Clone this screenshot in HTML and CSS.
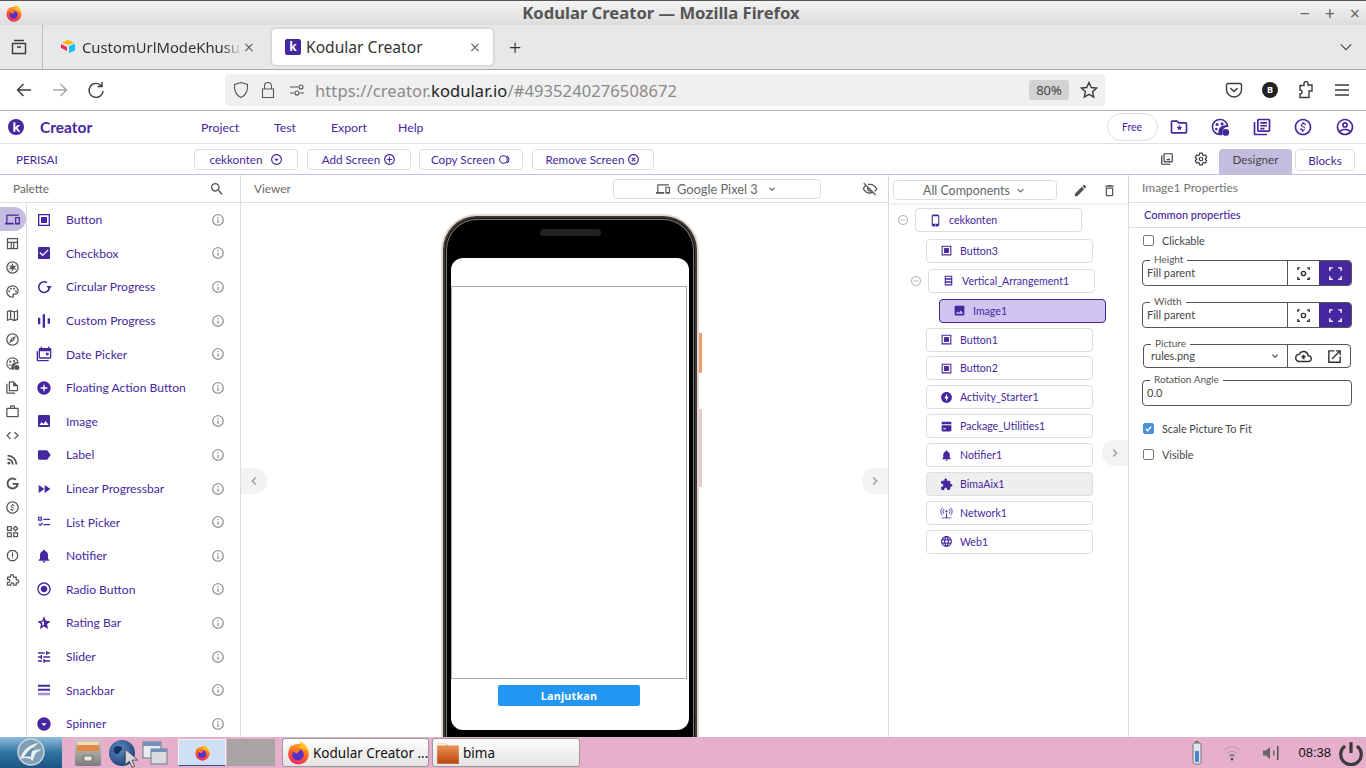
FILE: index.html
```html
<!DOCTYPE html>
<html lang="en">
<head>
<meta charset="utf-8">
<title>Kodular Creator — Mozilla Firefox</title>
<link rel="stylesheet" href="styles.css">
</head>
<body>
<svg class="sprite" aria-hidden="true">
<defs>
<linearGradient id="ffg" x1="0.7" y1="0" x2="0.3" y2="1"><stop offset="0" stop-color="#ffb11f"/><stop offset="0.55" stop-color="#ff5a2c"/><stop offset="1" stop-color="#e8216d"/></linearGradient>
<linearGradient id="foldg" x1="0" y1="0" x2="0" y2="1"><stop offset="0" stop-color="#ee9a5c"/><stop offset="1" stop-color="#b9450f"/></linearGradient>
<radialGradient id="globeg" cx="0.4" cy="0.35" r="0.7"><stop offset="0" stop-color="#5c8dc9"/><stop offset="1" stop-color="#1c3f74"/></radialGradient>
<linearGradient id="cabg" x1="0" y1="0" x2="0" y2="1"><stop offset="0" stop-color="#c9c9c5"/><stop offset="1" stop-color="#807e7a"/></linearGradient>
<symbol id="firefox" viewBox="0 0 24 24"><circle cx="12" cy="13.5" r="10" fill="url(#ffg)"/><path d="M13 1c5 2.500 9 6.500 9 12-2-3.500-5-5.500-9-5.500 1.500-2 1-4.500 0-6.500z" fill="#ffc21f"/><path d="M2.500 9c1-2 2-3.500 3.500-4.500 0 2 1 3 2.500 3.500z" fill="#ff8a1f"/><circle cx="11.500" cy="14" r="5.500" fill="#5a2fc9"/><path d="M6.500 10.500c2-2 5.500-2.500 8-.5-2 0-3 1-3 2.500-2 .5-3.500-.5-5-2z" fill="#ff7a1f"/></symbol>
<symbol id="button" viewBox="0 0 24 24"><path fill-rule="evenodd" d="M3 3h18v18H3zM5 5v14h14V5z"/><path d="M7.500 7.500h9v9h-9z"/></symbol>
<symbol id="checkbox" viewBox="0 0 24 24"><path d="M19 3H5c-1.110 0-2 .9-2 2v14c0 1.100.89 2 2 2h14c1.110 0 2-.9 2-2V5c0-1.100-.89-2-2-2zm-9 14l-5-5 1.410-1.410L10 14.170l7.590-7.590L19 8l-9 9z"/></symbol>
<symbol id="circular" viewBox="0 0 24 24"><path d="M16.500 5.500A8 8 0 1 0 20 13.500" fill="none" stroke="currentColor" stroke-width="2.400"/><path d="M15.500 10.500H24l-4.250 5z"/></symbol>
<symbol id="custom" viewBox="0 0 24 24"><path d="M3 7h3.500v10H3zM10 2h3.500v20H10zM17.500 8H21v8h-3.500z"/></symbol>
<symbol id="date" viewBox="0 0 24 24"><path d="M3 8H1v13c0 1.100.9 2 2 2h16v-2H3z"/><path d="M21 3h-1V1h-2v2H9V1H7v2H6C4.900 3 4 3.900 4 5v12c0 1.100.9 2 2 2h15c1.100 0 2-.9 2-2V5c0-1.100-.9-2-2-2zm0 14H6V8h15zM15 10h4v4h-4z"/></symbol>
<symbol id="fab" viewBox="0 0 24 24"><path d="M12 2C6.480 2 2 6.480 2 12s4.480 10 10 10 10-4.480 10-10S17.520 2 12 2zm5 11h-4v4h-2v-4H7v-2h4V7h2v4h4v2z"/></symbol>
<symbol id="image" viewBox="0 0 24 24"><path d="M21 19V5c0-1.100-.9-2-2-2H5c-1.100 0-2 .9-2 2v14c0 1.100.9 2 2 2h14c1.100 0 2-.9 2-2zM8.500 13.500l2.500 3.010L14.500 12l4.500 6H5l3.500-4.500z"/></symbol>
<symbol id="label" viewBox="0 0 24 24"><path d="M17.630 5.840C17.270 5.330 16.670 5 16 5L5 5.010C3.900 5.010 3 5.900 3 7v10c0 1.100.9 1.990 2 1.990L16 19c.67 0 1.270-.33 1.630-.84L22 12l-4.370-6.160z"/></symbol>
<symbol id="linear" viewBox="0 0 24 24"><path d="M4 18l8.500-6L4 6v12zm9-12v12l8.500-6L13 6z"/></symbol>
<symbol id="list" viewBox="0 0 24 24"><path d="M11 7h10v2H11zM11 15h10v2H11zM3 4h6v6H3zm1.800 1.800v2.400h2.400V5.800zM3.400 15.600l1.400-1.400 1.500 1.500 3-3 1.400 1.400-4.400 4.400z"/></symbol>
<symbol id="bell" viewBox="0 0 24 24"><path d="M12 22c1.100 0 2-.9 2-2h-4c0 1.100.89 2 2 2zm6-6v-5c0-3.070-1.640-5.640-4.500-6.320V4c0-.83-.67-1.500-1.500-1.500s-1.500.67-1.500 1.500v.68C7.630 5.360 6 7.920 6 11v5l-2 2v1h16v-1l-2-2z"/></symbol>
<symbol id="radio" viewBox="0 0 24 24"><path d="M12 7c-2.760 0-5 2.240-5 5s2.240 5 5 5 5-2.240 5-5-2.240-5-5-5zm0-5C6.480 2 2 6.480 2 12s4.480 10 10 10 10-4.480 10-10S17.520 2 12 2zm0 18c-4.420 0-8-3.580-8-8s3.580-8 8-8 8 3.580 8 8-3.580 8-8 8z"/></symbol>
<symbol id="star" viewBox="0 0 24 24"><path fill-rule="evenodd" d="M12 17.270L18.180 21l-1.640-7.030L22 9.240l-7.190-.61L12 2 9.190 8.630 2 9.240l5.460 4.730L5.820 21zM12 14.500l-2.800 1.700.8-3.200-2.500-2.100 3.300-.3 1.200-3z"/></symbol>
<symbol id="tune" viewBox="0 0 24 24"><path d="M3 17v2h6v-2H3zM3 5v2h10V5H3zm10 16v-2h8v-2h-8v-2h-2v6h2zM7 9v2H3v2h4v2h2V9H7zm14 4v-2H11v2h10zm-6-4h2V7h4V5h-4V3h-2v6z"/></symbol>
<symbol id="snack" viewBox="0 0 24 24"><path d="M3 4h18v3H3zM3 10h18v3H3z"/><path d="M3 16h18v4H3z" opacity=".5"/></symbol>
<symbol id="spinner" viewBox="0 0 24 24"><path d="M12 2C6.480 2 2 6.480 2 12s4.480 10 10 10 10-4.480 10-10S17.520 2 12 2zm0 13l-4-4h8z"/></symbol>
<symbol id="info" viewBox="0 0 24 24"><path d="M11 7h2v2h-2zm0 4h2v6h-2zm1-9C6.480 2 2 6.480 2 12s4.480 10 10 10 10-4.480 10-10S17.520 2 12 2zm0 18c-4.410 0-8-3.590-8-8s3.590-8 8-8 8 3.590 8 8-3.590 8-8 8z"/></symbol>
<symbol id="search" viewBox="0 0 24 24"><path d="M15.500 14h-.79l-.28-.27A6.470 6.470 0 0 0 16 9.500 6.500 6.500 0 1 0 9.500 16c1.610 0 3.090-.59 4.230-1.570l.27.28v.79l5 4.990L20.490 19l-4.990-5zm-6 0C7.010 14 5 11.990 5 9.500S7.010 5 9.500 5 14 7.010 14 9.500 11.990 14 9.500 14z"/></symbol>
<symbol id="devices" viewBox="0 0 24 24"><path d="M4 6h18V4H4c-1.100 0-2 .9-2 2v11H0v3h14v-3H4V6zm19 2h-6c-.55 0-1 .45-1 1v10c0 .55.45 1 1 1h6c.55 0 1-.45 1-1V9c0-.55-.45-1-1-1zm-1 9h-4v-7h4v7z"/></symbol>
<symbol id="table" viewBox="0 0 24 24"><path fill-rule="evenodd" d="M3 3h18v18H3zM5 5v4h14V5zM5 11v8h4v-8zM11 11v8h2v-8zM15 11v8h4v-8z"/></symbol>
<symbol id="camera" viewBox="0 0 24 24"><path fill-rule="evenodd" d="M12 2a10 10 0 1 0 0 20 10 10 0 0 0 0-20zm0 2a8 8 0 1 1 0 16 8 8 0 0 1 0-16z"/><path d="M12 8l3.500 2v4L12 16l-3.500-2v-4zM12 4.500l1 3.500h-2zM19 9l-3 2-1-1.700zM18.500 16l-3.500-1 1-1.800zM10 19.500l1-3.500h2zM5 15l3-2 1 1.700zM5.500 8L9 9l-1 1.800z"/></symbol>
<symbol id="palette" viewBox="0 0 24 24"><path d="M12 2C6.490 2 2 6.490 2 12s4.490 10 10 10c1.380 0 2.500-1.120 2.500-2.500 0-.61-.23-1.200-.64-1.670-.08-.1-.13-.21-.13-.33 0-.28.220-.5.500-.5H16c3.310 0 6-2.690 6-6 0-4.960-4.490-9-10-9zm4 13h-1.770c-1.380 0-2.500 1.120-2.500 2.500 0 .61.220 1.190.630 1.650.08.090.14.210.14.350 0 .28-.22.500-.5.500-4.410 0-8-3.590-8-8s3.590-8 8-8 8 3.140 8 7c0 2.210-1.790 4-4 4z"/><circle cx="6.500" cy="11.500" r="1.500"/><circle cx="9.500" cy="7.500" r="1.500"/><circle cx="14.500" cy="7.500" r="1.500"/><circle cx="17.500" cy="11.500" r="1.500"/></symbol>
<symbol id="map" viewBox="0 0 24 24"><path d="M20.500 3l-.16.030L15 5.100 9 3 3.360 4.900c-.21.070-.36.250-.36.480V20.500c0 .28.220.5.500.5l.16-.03L9 18.900l6 2.100 5.640-1.900c.21-.07.36-.25.360-.48V3.500c0-.28-.22-.5-.5-.5zM10 5.470l4 1.400v11.660l-4-1.400V5.470zm-5 .99l3-1.010v11.700l-3 1.160V6.460zm14 11.080l-3 1.010V6.860l3-1.160v11.840z"/></symbol>
<symbol id="compass" viewBox="0 0 24 24"><path d="M12 2C6.480 2 2 6.480 2 12s4.480 10 10 10 10-4.480 10-10S17.520 2 12 2zm0 18c-4.410 0-8-3.590-8-8s3.590-8 8-8 8 3.590 8 8-3.590 8-8 8zm-5.500-2.500l7.510-3.490L17.500 6.500 9.990 9.990 6.500 17.500zm5.500-6.600c.61 0 1.100.49 1.100 1.100s-.49 1.100-1.100 1.100-1.100-.49-1.100-1.100.49-1.100 1.100-1.100z"/></symbol>
<symbol id="face" viewBox="0 0 24 24"><path d="M12 2a10 10 0 1 0 0 20c1 0 2-.2 3-.5V18a6 6 0 0 1 6-6h1A10 10 0 0 0 12 2zm0 2a8 8 0 0 1 7.700 6H18a8 8 0 0 0-7.900 9.800A8 8 0 0 1 12 4z"/><circle cx="8.500" cy="9" r="1.800"/><circle cx="14.500" cy="8" r="1.800"/><circle cx="7.500" cy="14.500" r="1.500"/><circle cx="19" cy="18.500" r="4"/></symbol>
<symbol id="copy" viewBox="0 0 24 24"><path d="M4 6H2v14c0 1.100.9 2 2 2h12v-2H4z"/><path d="M14 2H8c-1.100 0-2 .9-2 2v12c0 1.100.9 2 2 2h11c1.100 0 2-.9 2-2V9zm5 14H8V4h5v6h6z"/></symbol>
<symbol id="work" viewBox="0 0 24 24"><path d="M20 6h-4V4c0-1.110-.89-2-2-2h-4c-1.110 0-2 .89-2 2v2H4c-1.110 0-2 .89-2 2v11c0 1.110.89 2 2 2h16c1.110 0 2-.89 2-2V8c0-1.110-.89-2-2-2zM10 4h4v2h-4V4zm10 15H4V8h16v11z"/></symbol>
<symbol id="code" viewBox="0 0 24 24"><path d="M9.400 16.600L4.800 12l4.600-4.600L8 6l-6 6 6 6 1.400-1.400zm5.200 0l4.600-4.600-4.600-4.600L16 6l6 6-6 6-1.400-1.400z"/></symbol>
<symbol id="rss" viewBox="0 0 24 24"><circle cx="6.180" cy="17.820" r="2.180"/><path d="M4 4.440v2.830c7.030 0 12.730 5.700 12.730 12.730h2.830c0-8.590-6.970-15.560-15.560-15.560zm0 5.660v2.830c3.900 0 7.070 3.170 7.070 7.070h2.830c0-5.470-4.430-9.900-9.900-9.900z"/></symbol>
<symbol id="google" viewBox="0 0 24 24"><path d="M21.500 11H12v3h6.100c-.7 2.700-3 4.500-6.100 4.500a6.500 6.500 0 1 1 4.300-11.400l2.200-2.200A9.600 9.600 0 0 0 12 2.500a9.500 9.500 0 1 0 0 19c5.500 0 9.700-4 9.700-9.500 0-.4 0-.7-.2-1z"/></symbol>
<symbol id="dollar" viewBox="0 0 24 24"><path d="M12 2C6.480 2 2 6.480 2 12s4.480 10 10 10 10-4.480 10-10S17.520 2 12 2zm0 18c-4.410 0-8-3.590-8-8s3.590-8 8-8 8 3.590 8 8-3.590 8-8 8z"/><path d="M12.900 11.300c-1.600-.4-2.100-.8-2.100-1.400 0-.7.700-1.200 1.700-1.200 1.100 0 1.500.5 1.600 1.300h1.400c-.1-1.100-.7-2.100-2-2.400V6.300h-1.900v1.300c-1.200.3-2.200 1-2.200 2.300 0 1.500 1.200 2.200 3 2.600 1.600.4 1.900.9 1.900 1.500 0 .4-.3 1.100-1.700 1.100-1.300 0-1.800-.6-1.900-1.300H8.300c.1 1.400 1.100 2.200 2.400 2.400v1.400h1.900v-1.300c1.200-.2 2.200-1 2.200-2.300 0-1.800-1.500-2.400-1.900-2.500z"/></symbol>
<symbol id="apps" viewBox="0 0 24 24"><path d="M3 3h8v8H3zm2 2v4h4V5zM3 13h8v8H3zm2 2v4h4v-4zM13 13h8v8h-8zm2 2v4h4v-4zM16.700 2.300l5 5-5 5-5-5zm0 2.800l-2.200 2.200 2.200 2.200 2.200-2.200z"/></symbol>
<symbol id="alert" viewBox="0 0 24 24"><path d="M15.320 3H8.680c-.26 0-.52.110-.7.290L3.290 7.980c-.18.180-.29.440-.29.700v6.640c0 .27.110.52.290.71l4.680 4.680c.19.180.45.290.710.290h6.640c.27 0 .52-.11.710-.29l4.680-4.680c.19-.19.290-.44.290-.71V8.680c0-.27-.11-.52-.29-.71l-4.680-4.680c-.19-.18-.44-.29-.71-.29zM19 14.900L14.900 19H9.100L5 14.900V9.100L9.100 5h5.800L19 9.100v5.800z"/><circle cx="12" cy="16" r="1"/><path d="M11 7h2v7h-2z"/></symbol>
<symbol id="puzzle" viewBox="0 0 24 24"><path fill="none" stroke="currentColor" stroke-width="2" stroke-linejoin="round" d="M4 8h4.500V6.500a2.500 2.500 0 0 1 5 0V8H18v4.500h1.500a2.500 2.500 0 0 1 0 5H18V21h-4v-1.500a2.300 2.300 0 0 0-4.600 0V21H4v-4.500h1.500a2.300 2.300 0 0 0 0-4.600H4z"/></symbol>
<symbol id="puzzlef" viewBox="0 0 24 24"><path d="M20.500 11H19V7c0-1.100-.9-2-2-2h-4V3.500C13 2.120 11.880 1 10.500 1S8 2.120 8 3.500V5H4c-1.100 0-1.990.9-1.990 2v3.800H3.500c1.490 0 2.700 1.210 2.700 2.700s-1.210 2.700-2.700 2.700H2V20c0 1.100.9 2 2 2h3.800v-1.500c0-1.490 1.210-2.700 2.700-2.700 1.490 0 2.700 1.210 2.700 2.700V22H17c1.100 0 2-.9 2-2v-4h1.500c1.380 0 2.500-1.120 2.500-2.500S21.880 11 20.500 11z"/></symbol>
<symbol id="eyeoff" viewBox="0 0 24 24"><path d="M12 6c3.790 0 7.170 2.130 8.820 5.500-.59 1.220-1.420 2.270-2.410 3.120l1.410 1.410c1.390-1.230 2.490-2.770 3.180-4.530C21.270 7.110 17 4 12 4c-1.270 0-2.490.2-3.640.57l1.650 1.650C10.660 6.090 11.320 6 12 6zM2.010 3.870l2.680 2.680C3.060 7.830 1.770 9.530 1 11.500 2.730 15.890 7 19 12 19c1.520 0 2.980-.29 4.320-.82l3.420 3.420 1.410-1.410L3.420 2.450 2.010 3.870zm7.500 7.500l2.610 2.610c-.04.010-.08.020-.12.020-1.380 0-2.500-1.120-2.500-2.500 0-.05.010-.08.010-.13zm-3.400-3.400l1.750 1.750c-.23.550-.36 1.150-.36 1.780 0 2.480 2.020 4.500 4.500 4.500.63 0 1.230-.13 1.770-.36l.98.980c-.88.240-1.800.38-2.750.38-3.790 0-7.170-2.130-8.820-5.500.7-1.430 1.720-2.610 2.930-3.530z"/></symbol>
<symbol id="pencil" viewBox="0 0 24 24"><path d="M3 17.250V21h3.750L17.810 9.940l-3.750-3.750L3 17.250zM20.710 7.040c.39-.39.39-1.020 0-1.410l-2.340-2.340c-.39-.39-1.020-.39-1.410 0l-1.830 1.830 3.750 3.750 1.830-1.830z"/></symbol>
<symbol id="trash" viewBox="0 0 24 24"><path d="M6 19c0 1.100.9 2 2 2h8c1.100 0 2-.9 2-2V7H6v12zM8 9h8v10H8V9zm7.500-5l-1-1h-5l-1 1H5v2h14V4z"/></symbol>
<symbol id="gear" viewBox="0 0 24 24"><path fill="none" stroke="currentColor" stroke-width="2" d="M19.430 12.980c.04-.32.07-.64.07-.98s-.03-.66-.07-.98l2.110-1.650c.19-.15.24-.42.12-.64l-2-3.460c-.12-.22-.39-.3-.61-.22l-2.490 1c-.52-.4-1.080-.73-1.690-.98l-.38-2.650C14.460 2.180 14.250 2 14 2h-4c-.25 0-.46.18-.49.420l-.38 2.650c-.61.250-1.170.590-1.690.980l-2.490-1c-.23-.09-.49 0-.61.220l-2 3.460c-.13.220-.07.490.12.640l2.110 1.650c-.04.320-.07.650-.07.980s.03.660.07.980l-2.110 1.650c-.19.150-.24.420-.12.640l2 3.460c.12.220.39.300.61.220l2.490-1c.52.400 1.080.730 1.690.980l.38 2.650c.03.240.24.420.49.420h4c.25 0 .46-.18.49-.42l.38-2.650c.61-.25 1.170-.59 1.690-.98l2.490 1c.23.090.49 0 .61-.22l2-3.460c.12-.22.07-.49-.12-.64l-2.110-1.650z"/><circle cx="12" cy="12" r="3" fill="none" stroke="currentColor" stroke-width="2"/></symbol>
<symbol id="gallery" viewBox="0 0 24 24"><path d="M4 6H2v14c0 1.100.9 2 2 2h14v-2H4z"/><path d="M20 2H8c-1.100 0-2 .9-2 2v12c0 1.100.9 2 2 2h12c1.100 0 2-.9 2-2V4c0-1.100-.9-2-2-2zm0 14H8V4h12zM10 14l2-2.500 1.500 1.500 2-2.500 2.500 3.500z"/></symbol>
<symbol id="folderstar" viewBox="0 0 24 24"><path d="M20 6h-8l-2-2H4c-1.100 0-2 .9-2 2v12c0 1.100.9 2 2 2h16c1.100 0 2-.9 2-2V8c0-1.100-.9-2-2-2zm0 12H4V6h5.200l2 2H20zM12.500 9.500l1 2.300 2.500.2-1.900 1.600.6 2.400-2.200-1.300-2.200 1.300.6-2.400L9 12l2.500-.2z"/></symbol>
<symbol id="news" viewBox="0 0 24 24"><path d="M4 6H2v14c0 1.100.9 2 2 2h14v-2H4z"/><path d="M20 2H8c-1.100 0-2 .9-2 2v12c0 1.100.9 2 2 2h12c1.100 0 2-.9 2-2V4c0-1.100-.9-2-2-2zm0 14H8V4h12zM10 6h8v2h-8zM10 9.500h8v2h-8zM10 13h5v2h-5z"/></symbol>
<symbol id="account" viewBox="0 0 24 24"><path d="M12 2C6.480 2 2 6.480 2 12s4.480 10 10 10 10-4.480 10-10S17.520 2 12 2zm0 2c4.410 0 8 3.590 8 8 0 1.500-.41 2.900-1.130 4.100C17.100 14.800 14.600 14 12 14s-5.100.8-6.870 2.100A7.960 7.960 0 0 1 4 12c0-4.410 3.590-8 8-8zm0 16a7.960 7.960 0 0 1-5.500-2.200C8 16.700 10 16 12 16s4 .7 5.500 1.800A7.960 7.960 0 0 1 12 20z"/><path fill-rule="evenodd" d="M12 6a3.500 3.500 0 1 0 0 7 3.500 3.500 0 0 0 0-7zm0 2a1.500 1.500 0 1 1 0 3 1.500 1.500 0 0 1 0-3z"/></symbol>
<symbol id="kicon" viewBox="0 0 24 24"><circle cx="12" cy="12" r="12"/><path fill="#fff" d="M8 5h3v7.500L14.500 9h3.700l-4 4 4.300 6h-3.600l-2.900-4.100-1 1V19H8z"/></symbol>
<symbol id="minusc" viewBox="0 0 24 24"><path d="M7 11h10v2H7zM12 2C6.480 2 2 6.480 2 12s4.480 10 10 10 10-4.480 10-10S17.520 2 12 2zm0 18c-4.410 0-8-3.590-8-8s3.590-8 8-8 8 3.590 8 8-3.590 8-8 8z"/></symbol>
<symbol id="addc" viewBox="0 0 24 24"><path d="M13 7h-2v4H7v2h4v4h2v-4h4v-2h-4zM12 2C6.480 2 2 6.480 2 12s4.480 10 10 10 10-4.480 10-10S17.520 2 12 2zm0 18c-4.410 0-8-3.590-8-8s3.590-8 8-8 8 3.590 8 8-3.590 8-8 8z"/></symbol>
<symbol id="xc" viewBox="0 0 24 24"><path d="M14.590 8L12 10.590 9.410 8 8 9.410 10.590 12 8 14.590 9.410 16 12 13.410 14.590 16 16 14.590 13.410 12 16 9.410zM12 2C6.480 2 2 6.480 2 12s4.480 10 10 10 10-4.480 10-10S17.520 2 12 2zm0 18c-4.410 0-8-3.590-8-8s3.590-8 8-8 8 3.590 8 8-3.590 8-8 8z"/></symbol>
<symbol id="downc" viewBox="0 0 24 24"><path d="M8 10.500h8L12 15zM12 2C6.480 2 2 6.480 2 12s4.480 10 10 10 10-4.480 10-10S17.520 2 12 2zm0 18c-4.410 0-8-3.590-8-8s3.590-8 8-8 8 3.590 8 8-3.590 8-8 8z"/></symbol>
<symbol id="copyc" viewBox="0 0 24 24"><path fill-rule="evenodd" d="M10 4a8 8 0 1 0 0 16 8 8 0 0 0 0-16zm0 2a6 6 0 1 1 0 12 6 6 0 0 1 0-12z"/><path d="M16 4.500a8 8 0 0 1 0 15v-2.200a6 6 0 0 0 0-10.600z"/></symbol>
<symbol id="chev" viewBox="0 0 24 24"><path d="M7.410 8.590L12 13.170l4.590-4.580L18 10l-6 6-6-6z"/></symbol>
<symbol id="chevr" viewBox="0 0 24 24"><path d="M8.590 16.590L13.170 12 8.590 7.410 10 6l6 6-6 6z"/></symbol>
<symbol id="chevl" viewBox="0 0 24 24"><path d="M15.410 7.410L10.830 12l4.580 4.590L14 18l-6-6 6-6z"/></symbol>
<symbol id="phone" viewBox="0 0 24 24"><path d="M16 1H8C6.340 1 5 2.340 5 4v16c0 1.660 1.340 3 3 3h8c1.660 0 3-1.340 3-3V4c0-1.660-1.340-3-3-3zm1 17H7V4h10zm-5 3.500a1 1 0 1 1 0-2 1 1 0 0 1 0 2z"/></symbol>
<symbol id="vert" viewBox="0 0 24 24"><path fill-rule="evenodd" d="M5 3h14v18H5zM7 5v3h10V5zM7 10.500v3h10v-3zM7 16v3h10v-3z"/></symbol>
<symbol id="bolt" viewBox="0 0 24 24"><path d="M12 2C6.480 2 2 6.480 2 12s4.480 10 10 10 10-4.480 10-10S17.520 2 12 2zm-1 17v-5.500H8L13 5v5.500h3z"/></symbol>
<symbol id="package" viewBox="0 0 24 24"><path d="M19 3H5c-1.100 0-2 .9-2 2v14c0 1.100.9 2 2 2h14c1.100 0 2-.9 2-2V5c0-1.100-.9-2-2-2zM3 8h18v1.500H3zM6 15h5v2H6z" fill-rule="evenodd"/></symbol>
<symbol id="network" viewBox="0 0 24 24"><path d="M3 21h18v1.500H3zM11 14h2v7h-2z"/><circle cx="12" cy="10" r="2"/><path fill="none" stroke="currentColor" stroke-width="1.600" d="M7.500 5.500a6.500 6.500 0 0 0 0 9M16.500 5.500a6.500 6.500 0 0 1 0 9M4.500 3a10 10 0 0 0 0 14M19.500 3a10 10 0 0 1 0 14"/></symbol>
<symbol id="globe" viewBox="0 0 24 24"><path d="M11.990 2C6.470 2 2 6.480 2 12s4.470 10 9.990 10C17.520 22 22 17.520 22 12S17.520 2 11.990 2zm6.930 6h-2.950c-.32-1.250-.78-2.450-1.380-3.560 1.840.63 3.370 1.910 4.330 3.560zM12 4.040c.83 1.200 1.480 2.530 1.910 3.960h-3.820c.43-1.430 1.080-2.760 1.910-3.960zM4.260 14C4.100 13.360 4 12.690 4 12s.1-1.360.26-2h3.380c-.08.660-.14 1.320-.14 2s.06 1.340.14 2H4.260zm.82 2h2.950c.32 1.250.78 2.450 1.380 3.560-1.840-.63-3.370-1.900-4.330-3.560zm2.950-8H5.080c.96-1.660 2.490-2.930 4.330-3.560C8.810 5.550 8.350 6.750 8.030 8zM12 19.960c-.83-1.200-1.480-2.530-1.910-3.960h3.820c-.43 1.430-1.080 2.760-1.910 3.960zM14.340 14H9.660c-.09-.66-.16-1.320-.16-2s.07-1.350.16-2h4.680c.09.650.16 1.320.16 2s-.07 1.340-.16 2zm.25 5.560c.6-1.110 1.060-2.310 1.380-3.560h2.950c-.96 1.650-2.490 2.930-4.330 3.560zM16.360 14c.08-.66.14-1.320.14-2s-.06-1.340-.14-2h3.380c.16.640.26 1.310.26 2s-.1 1.360-.26 2h-3.380z"/></symbol>
<symbol id="focus" viewBox="0 0 24 24"><path d="M7 3H3v4h2V5h2zM17 3v2h2v2h2V3zM5 17H3v4h4v-2H5zM19 17v2h-2v2h4v-4z"/><path fill-rule="evenodd" d="M12 8a4 4 0 1 0 0 8 4 4 0 0 0 0-8zm0 2a2 2 0 1 1 0 4 2 2 0 0 1 0-4z"/></symbol>
<symbol id="full" viewBox="0 0 24 24"><path d="M8 3H3v5h2V5h3zM16 3v2h3v3h2V3zM5 16H3v5h5v-2H5zM19 16v3h-3v2h5v-5z"/></symbol>
<symbol id="upload" viewBox="0 0 24 24"><path d="M19.350 10.040A7.490 7.490 0 0 0 12 4C9.110 4 6.600 5.640 5.350 8.040A5.994 5.994 0 0 0 0 14c0 3.310 2.690 6 6 6h13c2.760 0 5-2.240 5-5 0-2.640-2.050-4.780-4.650-4.960zM19 18H6c-2.210 0-4-1.790-4-4s1.790-4 4-4h.71C7.370 7.690 9.480 6 12 6c3.040 0 5.500 2.460 5.500 5.500v.5H19c1.660 0 3 1.340 3 3s-1.340 3-3 3z"/><path d="M8 13h2.550v3h2.900v-3H16l-4-4z"/></symbol>
<symbol id="open" viewBox="0 0 24 24"><path d="M19 19H5V5h7V3H3v18h18v-9h-2zM14 3v2h3.590l-9.830 9.830 1.410 1.410L19 6.410V10h2V3z"/></symbol>
</defs>
</svg>

<header class="titlebar">
  <svg class="ff-title"><use href="#firefox"/></svg>
  <div class="title-text">Kodular Creator — Mozilla Firefox</div>
  <div class="win-btns"><span>−</span><span>+</span><span>×</span></div>
</header>

<div class="tabbar">
  <div class="tab-view">
    <svg class="ln-icon" viewBox="0 0 18 18"><path d="M4 2.500h10M2.500 5.500h13v10h-13zM7 9h4"/></svg>
  </div>
  <div class="tab tab-off">
    <svg class="favicon" viewBox="0 0 16 16"><path d="M8 1l6 2.500L8 6 2 3.500z" fill="#fcb400"/><path d="M9 7l6-2.500v7L9 14z" fill="#18bfff"/><path d="M1 5l6 3v4L1 9z" fill="#f82b60"/></svg>
    <span class="tab-name fade">CustomUrlModeKhusu</span>
    <span class="tab-x">×</span>
  </div>
  <div class="tab tab-on">
    <span class="k-favicon">k</span>
    <span class="tab-name">Kodular Creator</span>
    <span class="tab-x">×</span>
  </div>
  <div class="tab-plus">+</div>
  <svg class="tab-list" viewBox="0 0 16 16"><path d="M2 5l6 6 6-6"/></svg>
</div>

<div class="navbar">
  <svg class="ln-icon nav-b" viewBox="0 0 18 18"><path d="M16 9H2.500M8.500 3l-6 6 6 6"/></svg>
  <svg class="ln-icon nav-f" viewBox="0 0 18 18"><path d="M2 9h13.500M9.500 3l6 6-6 6"/></svg>
  <svg class="ln-icon nav-r" viewBox="0 0 18 18"><path d="M14.500 5A7 7 0 1 0 16 10M15 1v4.500h-4.500"/></svg>
  <div class="urlbar">
    <svg class="ln-icon thin u-shield" viewBox="0 0 18 18"><path d="M9 1.500l6.500 2c.5 6-1 10.500-6.500 13-5.500-2.500-7-7-6.500-13z"/></svg>
    <svg class="ln-icon thin u-lock" viewBox="0 0 18 18"><path d="M3.500 8h11v8.500h-11zM5.500 8V5a3.500 3.500 0 0 1 7 0v3"/></svg>
    <svg class="ln-icon thin u-perm" viewBox="0 0 18 18"><path d="M2 6h8M2 12h4M12 12h4"/><circle cx="13" cy="6" r="2"/><circle cx="9" cy="12" r="2"/></svg>
    <div class="url"><span>https://creator.</span><b>kodular.io</b><span>/#4935240276508672</span></div>
    <div class="zoom-box">80%</div>
    <svg class="ln-icon u-star" viewBox="0 0 18 18"><path d="M9 1.500l2.300 5 5.200.6-3.900 3.600 1.100 5.300L9 13.300 4.300 16l1.100-5.300L1.500 7.100l5.200-.6z"/></svg>
  </div>
  <div class="nav-right">
    <svg class="ln-icon" viewBox="0 0 18 18"><path d="M3 2.500h12c.8 0 1.500.7 1.500 1.500v4.500a7.500 7.500 0 0 1-15 0V4c0-.8.700-1.500 1.500-1.500zM5.500 7L9 10.500 12.500 7"/></svg>
    <span class="avatar">B</span>
    <svg class="ln-icon" viewBox="0 0 18 18"><path d="M7 2.500a2 2 0 0 1 4 0V4h4v6h-3v6.500H3V13a2 2 0 0 0 0-4V4.500h4z"/></svg>
    <svg class="ln-icon" viewBox="0 0 18 18"><path d="M2 4h14M2 9h14M2 14h14"/></svg>
  </div>
</div>

<div class="app-head">
  <svg class="k-logo"><use href="#kicon"/></svg>
  <div class="brand">Creator</div>
  <nav class="menu"><span>Project</span><span>Test</span><span>Export</span><span>Help</span></nav>
  <div class="free">Free</div>
  <div class="head-icons">
    <svg class="p-icon"><use href="#folderstar"/></svg>
    <svg class="p-icon"><use href="#face"/></svg>
    <svg class="p-icon"><use href="#news"/></svg>
    <svg class="p-icon"><use href="#dollar"/></svg>
    <svg class="p-icon"><use href="#account"/></svg>
  </div>
</div>

<div class="proj-bar">
  <div class="proj-name">PERISAI</div>
  <div class="pbtn pb1">cekkonten <svg><use href="#downc"/></svg></div>
  <div class="pbtn pb2">Add Screen <svg><use href="#addc"/></svg></div>
  <div class="pbtn pb3">Copy Screen <svg><use href="#copyc"/></svg></div>
  <div class="pbtn pb4">Remove Screen <svg><use href="#xc"/></svg></div>
  <div class="proj-right">
    <svg class="d-icon"><use href="#gallery"/></svg>
    <svg class="d-icon d-gear"><use href="#gear"/></svg>
    <div class="mode mode-on">Designer</div>
    <div class="mode mode-off">Blocks</div>
  </div>
</div>

<main class="workspace">
  <aside class="palette">
    <div class="pal-head"><span>Palette</span><svg><use href="#search"/></svg></div>
    <div class="pal-body">
      <div class="rail">
        <div class="rail-i active"><svg><use href="#devices"/></svg></div>
        <div class="rail-i"><svg><use href="#table"/></svg></div>
        <div class="rail-i"><svg><use href="#camera"/></svg></div>
        <div class="rail-i"><svg><use href="#palette"/></svg></div>
        <div class="rail-i"><svg><use href="#map"/></svg></div>
        <div class="rail-i"><svg><use href="#compass"/></svg></div>
        <div class="rail-i"><svg><use href="#face"/></svg></div>
        <div class="rail-i"><svg><use href="#copy"/></svg></div>
        <div class="rail-i"><svg><use href="#work"/></svg></div>
        <div class="rail-i"><svg><use href="#code"/></svg></div>
        <div class="rail-i"><svg><use href="#rss"/></svg></div>
        <div class="rail-i"><svg><use href="#google"/></svg></div>
        <div class="rail-i"><svg><use href="#dollar"/></svg></div>
        <div class="rail-i"><svg><use href="#apps"/></svg></div>
        <div class="rail-i"><svg><use href="#alert"/></svg></div>
        <div class="rail-i"><svg><use href="#puzzle"/></svg></div>
      </div>
      <ul class="pal-list">
        <li><svg class="pi"><use href="#button"/></svg><span>Button</span><svg class="inf"><use href="#info"/></svg></li>
        <li><svg class="pi"><use href="#checkbox"/></svg><span>Checkbox</span><svg class="inf"><use href="#info"/></svg></li>
        <li><svg class="pi"><use href="#circular"/></svg><span>Circular Progress</span><svg class="inf"><use href="#info"/></svg></li>
        <li><svg class="pi"><use href="#custom"/></svg><span>Custom Progress</span><svg class="inf"><use href="#info"/></svg></li>
        <li><svg class="pi"><use href="#date"/></svg><span>Date Picker</span><svg class="inf"><use href="#info"/></svg></li>
        <li><svg class="pi"><use href="#fab"/></svg><span>Floating Action Button</span><svg class="inf"><use href="#info"/></svg></li>
        <li><svg class="pi"><use href="#image"/></svg><span>Image</span><svg class="inf"><use href="#info"/></svg></li>
        <li><svg class="pi"><use href="#label"/></svg><span>Label</span><svg class="inf"><use href="#info"/></svg></li>
        <li><svg class="pi"><use href="#linear"/></svg><span>Linear Progressbar</span><svg class="inf"><use href="#info"/></svg></li>
        <li><svg class="pi"><use href="#list"/></svg><span>List Picker</span><svg class="inf"><use href="#info"/></svg></li>
        <li><svg class="pi"><use href="#bell"/></svg><span>Notifier</span><svg class="inf"><use href="#info"/></svg></li>
        <li><svg class="pi"><use href="#radio"/></svg><span>Radio Button</span><svg class="inf"><use href="#info"/></svg></li>
        <li><svg class="pi"><use href="#star"/></svg><span>Rating Bar</span><svg class="inf"><use href="#info"/></svg></li>
        <li><svg class="pi"><use href="#tune"/></svg><span>Slider</span><svg class="inf"><use href="#info"/></svg></li>
        <li><svg class="pi"><use href="#snack"/></svg><span>Snackbar</span><svg class="inf"><use href="#info"/></svg></li>
        <li><svg class="pi"><use href="#spinner"/></svg><span>Spinner</span><svg class="inf"><use href="#info"/></svg></li>
      </ul>
    </div>
  </aside>

  <section class="viewer">
    <div class="view-head">
      <span class="view-title">Viewer</span>
      <div class="device"><svg class="dev-i"><use href="#devices"/></svg><span>Google Pixel 3</span><svg class="dev-c"><use href="#chev"/></svg></div>
      <svg class="eye"><use href="#eyeoff"/></svg>
    </div>
    <div class="view-body">
      <div class="phone">
        <div class="speaker"></div>
        <div class="screen">
          <div class="picture"></div>
          <div class="lanjut">Lanjutkan</div>
        </div>
        <div class="side side-a"></div>
        <div class="side side-b"></div>
      </div>
      <div class="pager pager-l"><svg><use href="#chevl"/></svg></div>
      <div class="pager pager-r"><svg><use href="#chevr"/></svg></div>
    </div>
  </section>

  <section class="components">
    <div class="comp-head">
      <div class="comp-select">All Components <svg><use href="#chev"/></svg></div>
      <svg class="comp-tool t1"><use href="#pencil"/></svg>
      <svg class="comp-tool t2"><use href="#trash"/></svg>
    </div>
    <div class="tree">
      <div class="node lv0 first"><svg class="toggle"><use href="#minusc"/></svg><div class="chip"><svg><use href="#phone"/></svg><span>cekkonten</span></div></div>
      <div class="node lv1 g1"><div class="chip"><svg><use href="#button"/></svg><span>Button3</span></div></div>
      <div class="node lv2 g2"><svg class="toggle"><use href="#minusc"/></svg><div class="chip"><svg><use href="#vert"/></svg><span>Vertical_Arrangement1</span></div></div>
      <div class="node lv3 g2"><div class="chip selected"><svg><use href="#image"/></svg><span>Image1</span></div></div>
      <div class="node lv1"><div class="chip"><svg><use href="#button"/></svg><span>Button1</span></div></div>
      <div class="node lv1"><div class="chip"><svg><use href="#button"/></svg><span>Button2</span></div></div>
      <div class="node lv1"><div class="chip"><svg><use href="#bolt"/></svg><span>Activity_Starter1</span></div></div>
      <div class="node lv1"><div class="chip"><svg><use href="#package"/></svg><span>Package_Utilities1</span></div></div>
      <div class="node lv1"><div class="chip"><svg><use href="#bell"/></svg><span>Notifier1</span></div></div>
      <div class="node lv1"><div class="chip hovered"><svg><use href="#puzzlef"/></svg><span>BimaAix1</span></div></div>
      <div class="node lv1"><div class="chip"><svg><use href="#network"/></svg><span>Network1</span></div></div>
      <div class="node lv1"><div class="chip"><svg><use href="#globe"/></svg><span>Web1</span></div></div>
    </div>
    <div class="pager pager-c"><svg><use href="#chevr"/></svg></div>
  </section>

  <aside class="props">
    <div class="props-head">Image1 Properties</div>
    <div class="props-group">Common properties</div>
    <div class="props-form">
      <label class="check c-click"><span class="box"></span>Clickable</label>
      <div class="field f-h">
        <span class="legend">Height</span>
        <span class="fval">Fill parent</span>
        <span class="fbtn"><svg><use href="#focus"/></svg></span>
        <span class="fbtn on"><svg><use href="#full"/></svg></span>
      </div>
      <div class="field f-w">
        <span class="legend">Width</span>
        <span class="fval">Fill parent</span>
        <span class="fbtn"><svg><use href="#focus"/></svg></span>
        <span class="fbtn on"><svg><use href="#full"/></svg></span>
      </div>
      <div class="field f-p">
        <span class="legend">Picture</span>
        <span class="fval pval">rules.png<svg><use href="#chev"/></svg></span>
        <span class="fbtn plain"><svg><use href="#upload"/></svg></span>
        <span class="fbtn plain"><svg><use href="#open"/></svg></span>
      </div>
      <div class="field f-r">
        <span class="legend">Rotation Angle</span>
        <span class="fval">0.0</span>
      </div>
      <label class="check c-scale"><span class="box checked"><svg viewBox="0 0 12 12"><path d="M2.500 6.500l2.500 2.500 4.500-5.500"/></svg></span>Scale Picture To Fit</label>
      <label class="check c-vis"><span class="box"></span>Visible</label>
    </div>
  </aside>
</main>

<footer class="taskbar">
  <div class="start"><svg viewBox="0 0 40 30"><circle cx="20" cy="15" r="13" fill="#7f9fb6" stroke="#c9d5dd" stroke-width="1.500"/><path d="M9 22c3-9 9-15 19-16-5 3-7 6-8 9 3-2 6-3 11-2-5 1-8 4-9 11-3-3-7-4-13-2z" fill="#e8eef2"/><path d="M13 20c3-5 6-8 10-10-2 3-3 6-3 10-2-1-4-1-7 0z" fill="#5f8aa8"/></svg></div>
  <svg class="launch l-cab" viewBox="0 0 28 28"><rect x="1" y="1" width="26" height="26" rx="2" fill="url(#cabg)"/><rect x="3" y="3" width="22" height="9" fill="#e08a4a"/><rect x="3" y="3" width="22" height="3" fill="#f5d9b5"/><rect x="10" y="17" width="8" height="5" fill="#e8e8e8" stroke="#666" stroke-width=".8"/></svg>
  <div class="launch-wrap">
    <svg class="launch" viewBox="0 0 28 28"><circle cx="14" cy="14" r="13" fill="url(#globeg)"/><path d="M7 8c3-2 6-1 7 1s-2 3-3 5-4 1-5-1 0-4 1-5zM17 15c3-1 5 0 5 2s-2 4-4 5-2-5-1-7z" fill="#16315c"/></svg>
    <svg class="cursor" viewBox="0 0 14 20"><path d="M1 1v15l4-3.500 2.500 6 2.500-1-2.500-6H13z" fill="#d3d7dc" stroke="#444" stroke-width=".8"/></svg>
  </div>
  <svg class="launch" viewBox="0 0 28 28"><rect x="2" y="3" width="18" height="16" fill="#e9ecef" stroke="#6a7a8c"/><rect x="2" y="3" width="18" height="4" fill="#6f93bd"/><rect x="10" y="10" width="16" height="15" fill="#d9dcdf" stroke="#6a7a8c"/><rect x="10" y="10" width="16" height="3" fill="#6f93bd"/></svg>
  <div class="pager-cell cell-on"><svg><use href="#firefox"/></svg></div>
  <div class="pager-cell cell-off"></div>
  <div class="winbtn wb1"><svg><use href="#firefox"/></svg><span>Kodular Creator ...</span></div>
  <div class="winbtn wb2"><svg viewBox="0 0 24 24"><path d="M2 3h8l2 2h10v17H2z" fill="url(#foldg)"/><path d="M2 3h8l1 2H2z" fill="#f4f1ec"/></svg><span>bima</span></div>
  <div class="tray">
    <svg class="t-bat" viewBox="0 0 12 24"><rect x="4" y="0" width="4" height="2" fill="#777"/><rect x="2" y="2" width="8" height="21" rx="2" fill="#dfe5ea" stroke="#777"/><rect x="4" y="10" width="4" height="11" fill="#4a86c5"/></svg>
    <svg class="t-wifi" viewBox="0 0 18 18"><path d="M1 6c5-4.500 11-4.500 16 0M4 9.500c3-3 7-3 10 0" fill="none" stroke="#c49bb0" stroke-width="1.500"/><path d="M6.500 12c1.500-1.500 3.500-1.500 5 0" fill="none" stroke="#776b70" stroke-width="1.500"/><circle cx="9" cy="15" r="1.500" fill="#555"/></svg>
    <svg class="t-vol" viewBox="0 0 18 18"><path d="M1 6.500h3L8 3v12L4 11.500H1z" fill="#666"/><path d="M11 6.500h1.500v5H11z" fill="#666"/><path d="M15 2h1.500v14H15z" fill="#555"/></svg>
    <span class="clock">08:38</span>
    <svg class="t-pow" viewBox="0 0 24 24"><path d="M12 2v10" stroke="#3a3a3a" stroke-width="3" fill="none"/><path d="M6.500 5.500a9.500 9.500 0 1 0 11 0" stroke="#3a3a3a" stroke-width="3" fill="none"/></svg>
  </div>
</footer>
</body>
</html>
```

FILE: styles.css
```css
* { box-sizing: border-box; }
html, body { margin: 0; padding: 0; }
body {
  width: 1366px; height: 768px; overflow: hidden;
  display: flex; flex-direction: column;
  font-family: "Lato", "Noto Sans", sans-serif;
  color: #4527a0; background: #fff;
}
.sprite { width: 0; height: 0; display: block; overflow: hidden; }
svg { display: block; flex: none; fill: currentColor; }
.ln-icon { width: 18px; height: 18px; fill: none; stroke: #3b3b3b; stroke-width: 1.400; }
.ln-icon.thin { stroke: #555; stroke-width: 1.100; }

/* browser chrome */
.titlebar {
  flex: 0 0 25px; display: flex; align-items: center; padding: 0 5px;
  background: linear-gradient(#f4f4f4, #dcdcdc);
  border-top: 1px solid #555;
  font-family: "Noto Sans", sans-serif; color: #555;
}
.ff-title { width: 18px; height: 18px; }
.title-text { flex: 1; text-align: center; font-size: 16.600px; font-weight: 700; white-space: nowrap; line-height: 22px; }
.win-btns { display: flex; gap: 13px; font-size: 18px; color: #666; width: 62px; }
.win-btns span { width: 12px; text-align: center; }
.tabbar {
  flex: 0 0 45px; display: flex; align-items: center; background: #e8e8e8;
  border-bottom: 1px solid #a8a8a8;
  font-family: "Noto Sans", sans-serif; color: #333;
}
.tab-view { width: 43px; height: 44px; border-right: 1px solid #bdbdbd; display: flex; align-items: center; padding-left: 10px; flex: none; }
.tab { height: 36px; display: flex; align-items: center; font-size: 15.600px; flex: none; border-radius: 4px; }
.tab-off { width: 217px; margin-left: 2px; padding-left: 15px; font-size: 14.800px; }
.tab-on { width: 221px; margin-left: 10px; padding-left: 13px; background: #fff; box-shadow: 0 0 3px rgba(0,0,0,.25); }
.favicon { width: 16px; height: 16px; margin-right: 6px; }
.k-favicon { width: 16px; height: 16px; background: #4527a0; color: #fff; font: 700 12px/16px "Noto Sans", sans-serif; text-align: center; border-radius: 2px; margin-right: 5px; flex: none; }
.tab-name { white-space: nowrap; overflow: hidden; flex: 1; min-width: 0; }
.fade { -webkit-mask-image: linear-gradient(90deg, #000 88%, transparent); mask-image: linear-gradient(90deg, #000 88%, transparent); }
.tab-x { width: 14px; text-align: center; font-size: 18px; color: #444; font-weight: 300; flex: none; }
.tab-off .tab-x { margin-right: 6px; }
.tab-on .tab-x { margin-right: 11px; }
.tab-plus { margin-left: 13px; font-size: 22px; font-weight: 300; color: #333; width: 18px; text-align: center; }
.tab-list { width: 14px; height: 14px; margin-left: auto; margin-right: 13px; fill: none; stroke: #444; stroke-width: 1.300; }

.navbar {
  flex: 0 0 41px; display: flex; align-items: center; background: #fff;
  border-bottom: 1px solid #b5b5b5; padding-left: 15px;
  font-family: "Noto Sans", sans-serif;
}
.nav-f { margin-left: 18px; opacity: .45; }
.nav-r { margin-left: 18px; }
.urlbar { width: 880px; height: 32px; margin-left: 120px; background: #f0f0f0; border-radius: 4px; display: flex; align-items: center; padding-left: 7px; }
.u-lock { margin-left: 9px; }
.u-perm { margin-left: 11px; }
.url { margin-left: 9px; font-size: 16.500px; color: #8a8a8a; white-space: nowrap; flex: 1; letter-spacing: .1px; }
.url b { font-weight: 400; color: #222; }
.zoom-box { width: 40px; height: 20px; background: #d2d2d2; border-radius: 3px; font-size: 13px; color: #444; text-align: center; line-height: 20px; }
.u-star { margin-left: 11px; margin-right: 7px; }
.nav-right { display: flex; align-items: center; gap: 18px; margin-left: 120px; }
.avatar { width: 16px; height: 16px; border-radius: 50%; background: #222; color: #fff; font-size: 9px; font-weight: 700; text-align: center; line-height: 16px; flex: none; margin: 0 1px; }

/* Kodular top bars */
.app-head { flex: 0 0 33px; display: flex; align-items: center; border-bottom: 1px solid #e0e0e0; padding-left: 8px; }
.k-logo { width: 16px; height: 16px; }
.brand { font-size: 15.500px; font-weight: 700; margin-left: 16px; width: 161px; }
.menu { display: flex; font-size: 12.300px; }
.menu span:nth-child(1) { width: 73px; }
.menu span:nth-child(2) { width: 57px; }
.menu span:nth-child(3) { width: 67px; }
.free { margin-left: 683px; width: 51px; height: 28px; border: 1px solid #ddd; border-radius: 14px; font-size: 10.500px; text-align: center; line-height: 26px; }
.head-icons { display: flex; gap: 21.500px; margin-left: 11px; }
.p-icon { width: 20px; height: 20px; }

.proj-bar { flex: 0 0 31px; min-height: 0; display: flex; align-items: flex-start; padding: 5px 0 0 16px; border-bottom: 1px solid #c5bde0; font-size: 11.700px; }
.proj-name { width: 178px; line-height: 21px; }
.pbtn { height: 21px; display: flex; align-items: center; justify-content: center; gap: 3px; padding-bottom: 2px; border: 1px solid #ddd; border-radius: 4px; white-space: nowrap; }
.pbtn svg { width: 13px; height: 13px; margin-top: 1px; }
.pb1 { width: 104px; gap: 7px; }
.pb2 { width: 104px; margin-left: 9px; }
.pb3 { width: 104px; margin-left: 8px; }
.pb4 { width: 122px; margin-left: 9px; }
.proj-right { display: flex; margin-left: auto; align-items: flex-start; padding-right: 11px; }
.d-icon { width: 14px; height: 14px; color: #3a3a3a; margin-top: 3px; margin-right: 20px; }
.d-gear { margin-right: 11px; }
.mode { text-align: center; line-height: 21px; }
.mode-on { width: 73px; height: 26px; background: #c5bde0; color: #444; border-radius: 4px 4px 0 0; }
.mode-off { width: 60px; height: 22px; margin-left: 3px; border: 1px solid #ddd; border-radius: 4px; }

/* workspace */
.workspace { flex: 1; min-height: 0; display: flex; overflow: hidden; }
.palette { width: 241px; flex: none; border-right: 1px solid #ddd; display: flex; flex-direction: column; }
.pal-head { flex: 0 0 28px; display: flex; align-items: center; justify-content: space-between; padding: 0 15px 0 13px; border-bottom: 1px solid #ddd; font-size: 11.800px; color: #666; }
.pal-head svg { width: 16px; height: 16px; color: #555; }
.pal-body { flex: 1; min-height: 0; display: flex; }
.rail { width: 27px; flex: none; border-right: 1px solid #ddd; padding-top: 4px; }
.rail-i { height: 24px; display: flex; align-items: center; padding-left: 5px; color: #555; }
.rail-i svg { width: 15px; height: 15px; }
.rail-i.active { background: #c5bde0; border-radius: 0 12px 12px 0; color: #4527a0; }
.pal-list { list-style: none; margin: 0; padding: 0; flex: 1; overflow: hidden; }
.pal-list li { height: 33.600px; display: flex; align-items: center; padding-left: 9px; font-size: 12.100px; white-space: nowrap; }
.pal-list span { margin-left: 14px; flex: 1; }
.pi { width: 16px; height: 16px; }
.inf { width: 14px; height: 14px; color: #8a8a8a; margin-right: 15px; }

.viewer { width: 648px; flex: none; border-right: 1px solid #ddd; display: flex; flex-direction: column; position: relative; }
.view-head { flex: 0 0 28px; display: flex; align-items: center; padding-left: 13px; border-bottom: 1px solid #ddd; color: #666; font-size: 11.800px; }
.view-title { width: 359px; }
.device { width: 208px; height: 20px; border: 1px solid #ddd; border-radius: 4px; display: flex; align-items: center; padding-left: 42px; gap: 7px; font-size: 12.800px; color: #666; }
.dev-i { width: 14px; height: 14px; color: #555; }
.dev-c { width: 12px; height: 12px; color: #555; margin-left: 1px; }
.eye { width: 16px; height: 16px; color: #555; margin-left: 41px; }
.view-body { flex: 1; min-height: 0; overflow: hidden; padding: 11px 0 0 200px; }
.phone {
  width: 258px; height: 560px; position: relative; background: #000;
  border: 2px solid #e6d6d0; border-bottom: 0; border-radius: 36px 36px 0 0;
  box-shadow: inset 0 0 0 2px #3a3a3a, inset 0 0 0 3px #111, inset 0 0 0 4px #777;
  padding: 42px 7px 0 8px;
}
.speaker { position: absolute; left: 97px; top: 13px; width: 61px; height: 7px; border-radius: 4px; background: #222; }
.screen { width: 238px; height: 472px; background: #fff; border-radius: 12px; padding: 28px 2px 0 0; display: flex; flex-direction: column; align-items: center; }
.picture { width: 236px; height: 393px; border: 1px solid #a8a8a8; align-self: flex-start; flex: none; }
.lanjut { width: 142px; height: 21px; margin-top: 6px; background: #2196f3; border-radius: 2px; color: #fff; font-family: "Noto Sans", sans-serif; font-size: 10.800px; font-weight: 700; text-align: center; line-height: 21px; letter-spacing: .2px; }
.side { position: absolute; right: -5px; width: 3px; border-radius: 0 1px 1px 0; }
.side-a { top: 117px; height: 40px; background: #f09a6e; }
.side-b { top: 193px; height: 78px; background: #ddd0cf; }
.pager { position: absolute; width: 26px; height: 26px; display: flex; align-items: center; justify-content: center; background: #f3f3f3; color: #999; }
.pager svg { width: 16px; height: 16px; }
.pager-l { left: 0; top: 293px; border-radius: 0 13px 13px 0; }
.pager-r { right: 0; top: 293px; border-radius: 13px 0 0 13px; }
.pager-c { right: 0; top: 265px; border-radius: 13px 0 0 13px; }

.components { width: 240px; flex: none; border-right: 1px solid #ddd; position: relative; }
.comp-head { height: 28px; display: flex; align-items: center; padding: 2px 0 0 4px; box-shadow: 0 2px 3px rgba(0,0,0,.08); }
.comp-select { width: 164px; height: 20px; border: 1px solid #ddd; border-radius: 4px; display: flex; align-items: center; justify-content: center; gap: 4px; font-size: 12.400px; color: #666; }
.comp-select svg { width: 13px; height: 13px; }
.comp-tool { width: 15px; height: 15px; color: #555; }
.t1 { margin-left: 16px; }
.t2 { margin-left: 14px; }
.tree { display: flex; flex-direction: column; gap: 4.900px; padding-top: 5px; }
.node { display: flex; align-items: center; height: 24px; }
.node.g1 { margin-top: 2px; }
.node.g2 { margin-top: 1px; }
.lv0 { margin-left: 8px; }
.lv1 { margin-left: 37px; }
.lv2 { margin-left: 21px; }
.lv3 { margin-left: 50px; }
.toggle { width: 12px; height: 12px; color: #bbb; margin-right: 6px; }
.chip { width: 167px; height: 24px; border: 1px solid #ddd; border-radius: 4px; display: flex; align-items: center; padding-left: 13px; font-size: 10.600px; white-space: nowrap; }
.chip svg { width: 13px; height: 13px; margin-right: 7px; }
.chip.selected { background: #d1c4f0; border-color: #4527a0; }
.chip.hovered { background: #eee; }

.props { flex: 1; min-width: 0; }
.props-head { height: 28px; padding-left: 13px; line-height: 25px; font-size: 12px; color: #757575; border-bottom: 1px solid #ddd; }
.props-group { height: 25px; padding-left: 15px; line-height: 24px; font-size: 11px; font-weight: 500; border-bottom: 1px solid #ddd; }
.props-form { display: flex; flex-direction: column; padding: 0 0 0 13px; font-size: 10.800px; color: #444; }
.check { display: flex; align-items: center; height: 14px; }
.box { width: 11px; height: 11px; margin-right: 8px; border: 1px solid #767676; border-radius: 2px; background: #fff; flex: none; }
.box.checked { background: #4a90d9; border-color: #4a90d9; }
.box svg { width: 9px; height: 9px; fill: none; stroke: #fff; stroke-width: 2; }
.c-click { margin-top: 5px; margin-left: 1px; }
.c-scale { margin-top: 15px; margin-left: 1px; }
.c-vis { margin-top: 12px; margin-left: 1px; }
.field { position: relative; width: 210px; height: 26px; border: 1px solid #555; border-radius: 4px; display: flex; color: #444; }
.f-h { margin-top: 13px; }
.f-w { margin-top: 16px; }
.f-p { margin-top: 16px; height: 24px; width: 208px; margin-left: 1px; }
.f-r { margin-top: 12px; }
.legend { position: absolute; left: 7px; top: -8px; background: #fff; padding: 0 4px; line-height: 12px; font-size: 10px; color: #555; }
.fval { flex: 1; padding-left: 4px; line-height: 24px; font-size: 11px; }
.pval { display: flex; align-items: center; justify-content: space-between; padding-left: 7px; padding-right: 6px; border-right: 1px solid #555; line-height: 22px; }
.pval svg { width: 12px; height: 12px; }
.f-p .fval { flex: 0 0 144px; }
.fbtn { width: 32px; display: flex; align-items: center; justify-content: center; color: #333; }
.fbtn svg { width: 17px; height: 17px; }
.fbtn:not(.plain):not(.on) { border-left: 1px solid #555; }
.fbtn.on { background: #4527a0; color: #fff; border-radius: 0 3px 3px 0; }
.fbtn.plain { width: 31px; }

/* desktop panel */
.taskbar { flex: 0 0 31px; background: #e6afcb; display: flex; align-items: center; font-family: "Noto Sans", sans-serif; color: #111; overflow: hidden; }
.start { width: 62px; height: 31px; background: linear-gradient(#8fbcdc, #2f739f 50%, #1d5585); flex: none; padding: 0 11px; }
.start svg { width: 40px; height: 30px; }
.launch { width: 28px; height: 28px; }
.l-cab { margin-left: 12px; }
.launch-wrap { position: relative; margin-left: 6px; width: 28px; height: 28px; }
.cursor { position: absolute; left: 16px; top: 9px; width: 15px; height: 21px; }
.launch-wrap + .launch { margin-left: 5px; }
.pager-cell { width: 48px; height: 27px; display: flex; align-items: center; justify-content: center; flex: none; }
.cell-on { background: #cfe0f5; border: 1px solid #f4f4f4; border-bottom: 1px solid #3b4f7a; margin-left: 9px; }
.cell-on svg { width: 17px; height: 17px; }
.cell-off { background: #a8a4a3; margin-left: 1px; }
.winbtn { height: 29px; display: flex; align-items: center; background: linear-gradient(#fdfdfd, #e6e4e2); border: 1px solid #999; border-radius: 3px; font-size: 13.500px; white-space: nowrap; overflow: hidden; flex: none; }
.wb1 { width: 147px; margin-left: 7px; padding-left: 3px; }
.wb1 svg { width: 25px; height: 25px; margin-right: 2px; }
.wb2 { width: 148px; margin-left: 3px; padding-left: 2px; }
.wb2 svg { width: 26px; height: 26px; margin-right: 2px; }
.tray { margin-left: auto; display: flex; align-items: center; }
.t-bat { width: 12px; height: 24px; }
.t-wifi { width: 18px; height: 18px; margin-left: 20px; }
.t-vol { width: 18px; height: 18px; margin-left: 21px; }
.clock { font-size: 13px; margin-left: 18px; font-family: "Liberation Sans", sans-serif; }
.t-pow { width: 26px; height: 26px; margin-left: 7px; margin-right: 2px; }
```
